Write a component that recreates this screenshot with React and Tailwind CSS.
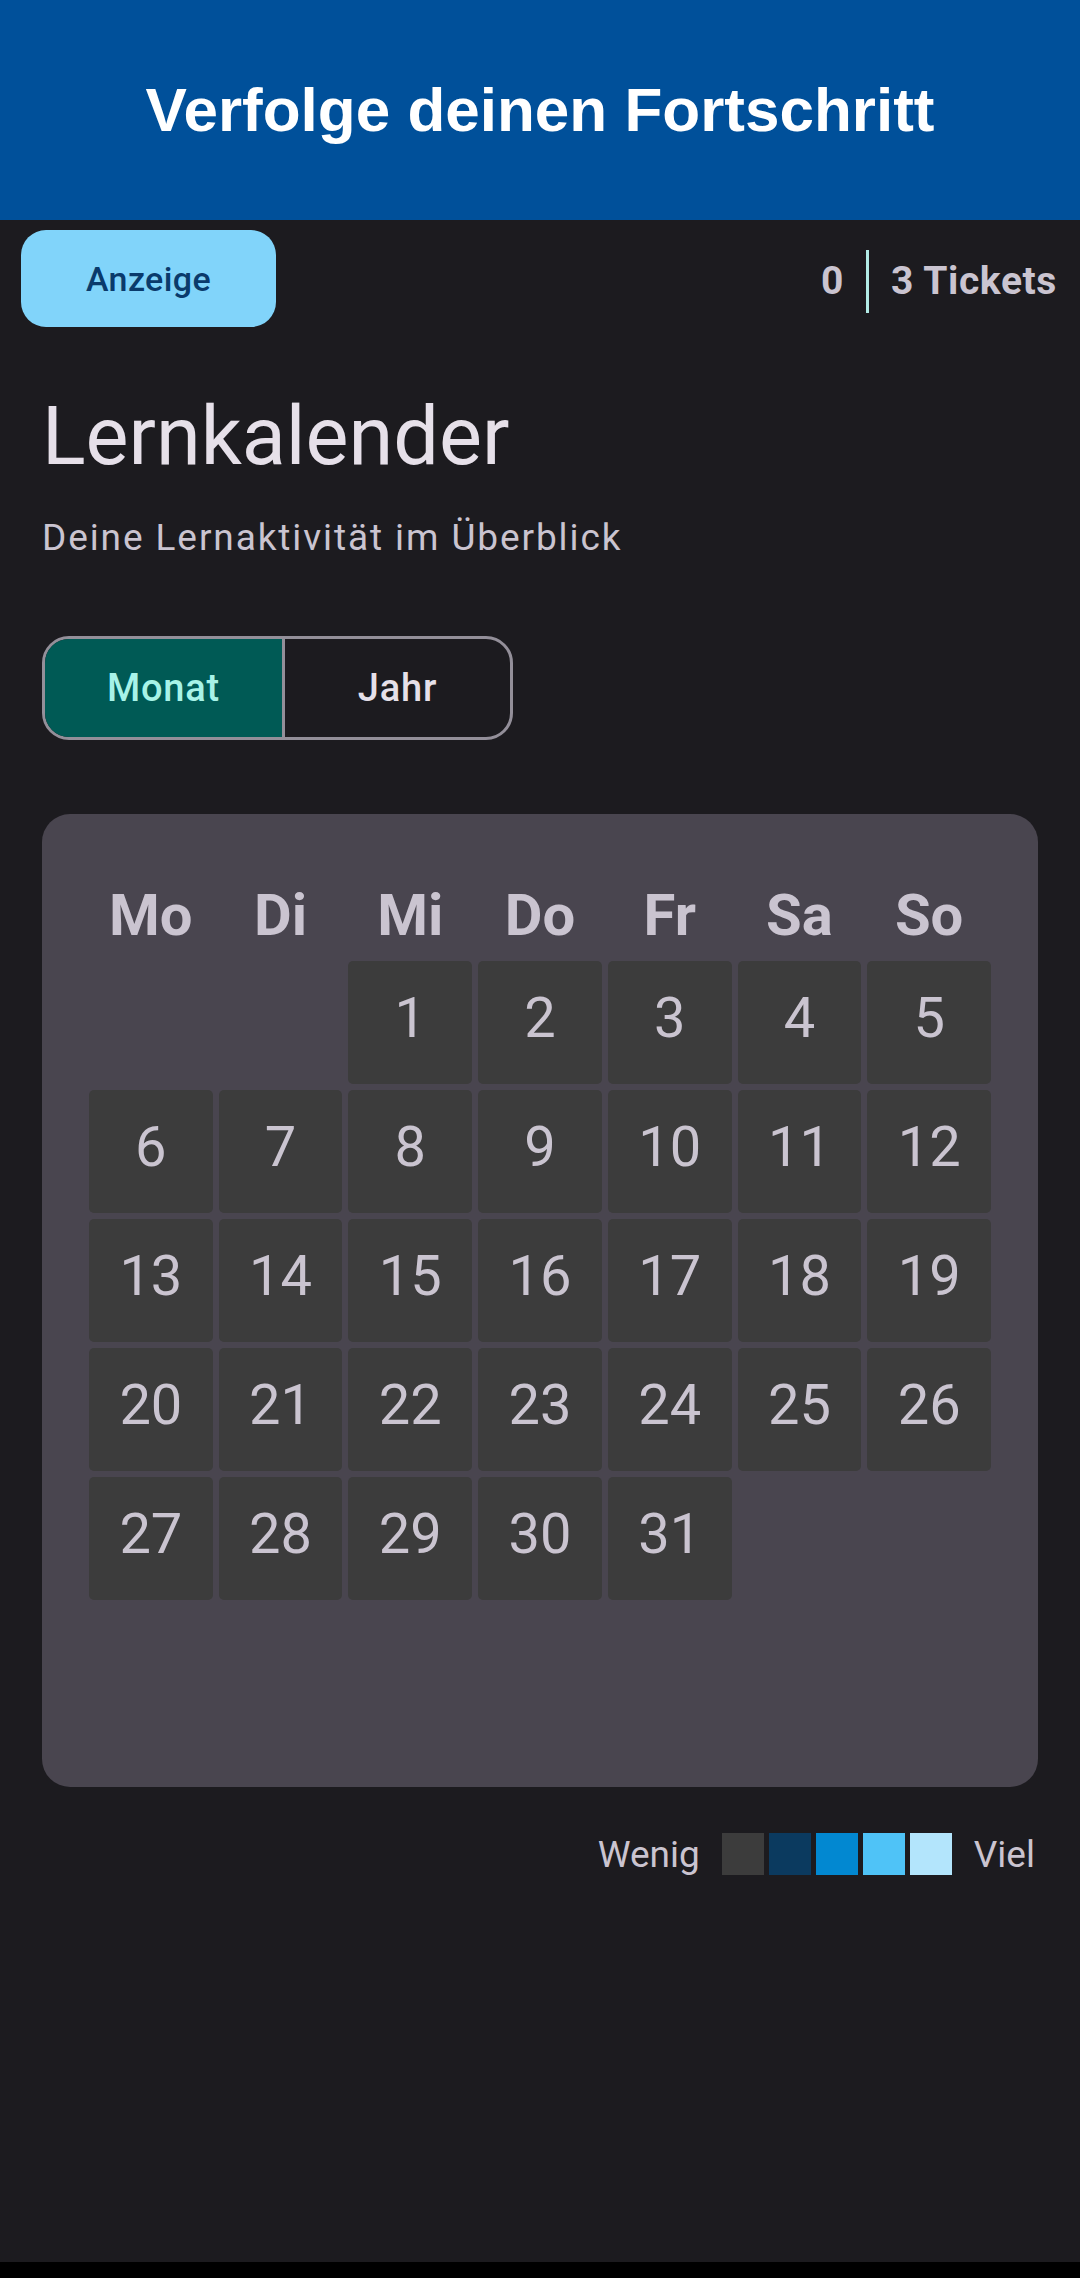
import { useState } from "react";

const WEEKDAYS = ["Mo", "Di", "Mi", "Do", "Fr", "Sa", "So"];
const LEGEND = ["bg-[#3c3c3c]", "bg-[#0b3a5f]", "bg-[#0288d1]", "bg-[#4fc3f7]", "bg-[#b3e5fc]"];

const App = () => {
  const [mode, setMode] = useState("monat");

  // month starts on a Wednesday -> two blanks
  const cells = [null, null, ...Array.from({ length: 31 }, (_, i) => i + 1)];

  return (
    <div className="w-[1080px] h-[2278px] flex flex-col bg-[#1c1b1f] font-['Roboto',sans-serif]">
      <header className="h-[220px] shrink-0 bg-[#00509a] flex items-center justify-center">
        <h1 className="text-[62px] leading-none font-bold text-white font-['Liberation_Sans',Arial,sans-serif]">
          Verfolge deinen Fortschritt
        </h1>
      </header>

      <div className="flex-1">
        {/* top bar */}
        <div className="flex items-center justify-between pl-[21px] pr-[23px] pt-[10px]">
          <button className="w-[255px] h-[97px] rounded-[25px] bg-[#81d4fa] text-[#0a3a6b] text-[34px] font-medium leading-none tracking-[0.4px]">
            Anzeige
          </button>
          <div className="flex items-center pt-[5px] text-[39px] font-bold leading-none tracking-[0.6px] text-[#cac4d0]">
            <span>0</span>
            <span className="mx-[22px] w-[3px] h-[63px] bg-[#b2ebe6]" />
            <span>3 Tickets</span>
          </div>
        </div>

        <div className="px-[42px]">
          <h2 className="mt-[69px] text-[81px] leading-none text-[#e6e0e9]">Lernkalender</h2>
          <p className="mt-[42px] text-[37px] leading-none tracking-[1.9px] text-[#cac4d0]">
            Deine Lernaktivität im Überblick
          </p>

          {/* Monat / Jahr toggle */}
          <div className="mt-[80px] flex w-[471px] h-[104px] rounded-[27px] border-[3px] border-[#938f99] overflow-hidden">
            <button
              onClick={() => setMode("monat")}
              className={`w-[240px] h-full text-[38px] font-medium leading-none tracking-[0.8px] border-r-[3px] border-[#938f99] ${
                mode === "monat" ? "bg-[#005a55] text-[#a7f3e8]" : "text-[#e6e0e9]"
              }`}
            >
              Monat
            </button>
            <button
              onClick={() => setMode("jahr")}
              className={`flex-1 h-full text-[38px] font-medium leading-none tracking-[0.8px] ${
                mode === "jahr" ? "bg-[#005a55] text-[#a7f3e8]" : "text-[#e6e0e9]"
              }`}
            >
              Jahr
            </button>
          </div>

          {/* calendar card */}
          <div className="mt-[74px] w-[996px] rounded-[28px] bg-[#49454f] px-[44px] pt-[72px] pb-[184px]">
            <div className="grid grid-cols-7 mb-[14px]">
              {WEEKDAYS.map((d) => (
                <div key={d} className="text-center text-[58px] font-bold leading-none text-[#cac4d0]">
                  {d}
                </div>
              ))}
            </div>
            <div className="grid grid-cols-7">
              {cells.map((n, i) =>
                n === null ? (
                  <div key={i} className="h-[123px] m-[3px]" />
                ) : (
                  <div
                    key={i}
                    className="h-[123px] m-[3px] rounded-[5px] bg-[#3c3c3c] flex items-center justify-center pb-[10px] text-[56px] leading-none text-[#cac4d0]"
                  >
                    {n}
                  </div>
                )
              )}
            </div>
          </div>

          {/* legend */}
          <div className="mt-[46px] w-[996px] pr-[3px] flex items-center justify-end text-[37px] leading-none text-[#cac4d0]">
            <span>Wenig</span>
            <div className="flex gap-[5px] mx-[22px]">
              {LEGEND.map((c) => (
                <div key={c} className={`w-[42px] h-[42px] ${c}`} />
              ))}
            </div>
            <span>Viel</span>
          </div>
        </div>
      </div>

      <div className="h-[16px] shrink-0 bg-black" />
    </div>
  );
};

export default App;
